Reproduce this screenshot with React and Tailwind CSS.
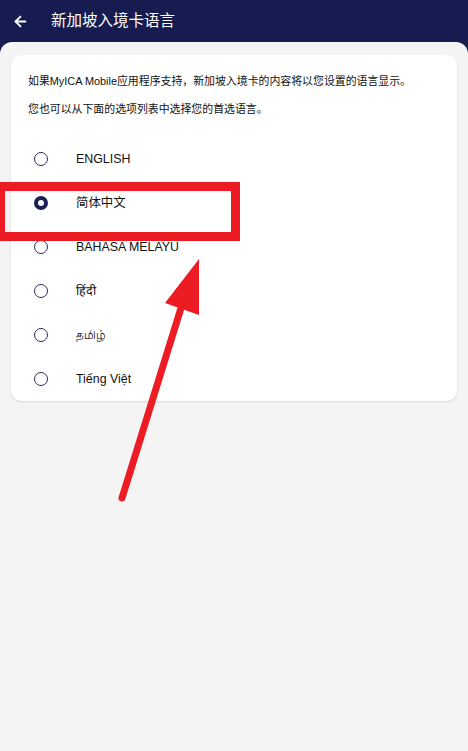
import { ArrowLeft } from 'lucide-react';
import { useState } from 'react';

const languages = [
  { id: 'en', label: 'ENGLISH' },
  { id: 'zh', label: '简体中文' },
  { id: 'ms', label: 'BAHASA MELAYU' },
  { id: 'hi', label: 'हिंदी' },
  { id: 'ta', label: 'தமிழ்' },
  { id: 'vi', label: 'Tiếng Việt' },
];

export default function App() {
  const [selected, setSelected] = useState('zh');

  return (
    <div
      className="relative w-[468px] h-[751px] overflow-hidden bg-[#161c4f]"
      style={{ fontFamily: '"Liberation Sans", "Noto Sans CJK SC", sans-serif' }}
    >
      {/* top bar */}
      <header className="h-[42px] flex items-center text-white">
        <button className="w-[40px] pl-[12px] flex items-center">
          <ArrowLeft className="w-[17px] h-[17px]" strokeWidth={2.5} />
        </button>
        <h1 className="ml-[11px] text-[15.5px] leading-none">新加坡入境卡语言</h1>
      </header>

      {/* body */}
      <main className="h-[709px] bg-[#f4f4f4] rounded-t-[12px] px-[11px] pt-[13px]">
        <section className="bg-white rounded-[10px] shadow-[0_1px_2px_rgba(0,0,0,0.12)]">
          <div className="px-[17px] pt-[18px] pb-[20px] text-[10.9px] leading-[16px] text-[#111] whitespace-nowrap">
            <p>如果MyICA Mobile应用程序支持，新加坡入境卡的内容将以您设置的语言显示。</p>
            <p className="mt-[12px]">您也可以从下面的选项列表中选择您的首选语言。</p>
          </div>
          <ul>
            {languages.map((lang) => {
              const active = lang.id === selected;
              return (
                <li key={lang.id}>
                  <button
                    onClick={() => setSelected(lang.id)}
                    className="w-full h-[44px] flex items-center pl-[23px] text-left"
                  >
                    <span
                      className={
                        active
                          ? 'w-[14px] h-[14px] rounded-full border-[4.5px] border-[#1b2154] bg-white'
                          : 'w-[14px] h-[14px] rounded-full border-[1.5px] border-[#2a2f5e] bg-white'
                      }
                    />
                    <span className="ml-[28px] text-[12.4px] text-[#111]">{lang.label}</span>
                  </button>
                </li>
              );
            })}
          </ul>
        </section>
      </main>

      {/* red annotation */}
      <svg
        className="absolute left-0 top-0 pointer-events-none"
        width="468"
        height="751"
        viewBox="0 0 468 751"
      >
        <rect x="0.5" y="186.5" width="235" height="50" fill="none" stroke="#ed1c24" strokeWidth="9" />
        <line x1="122" y1="498" x2="186" y2="292" stroke="#ed1c24" strokeWidth="7" strokeLinecap="round" />
        <polygon points="199,259 165,303 199,315" fill="#ed1c24" />
      </svg>
    </div>
  );
}
